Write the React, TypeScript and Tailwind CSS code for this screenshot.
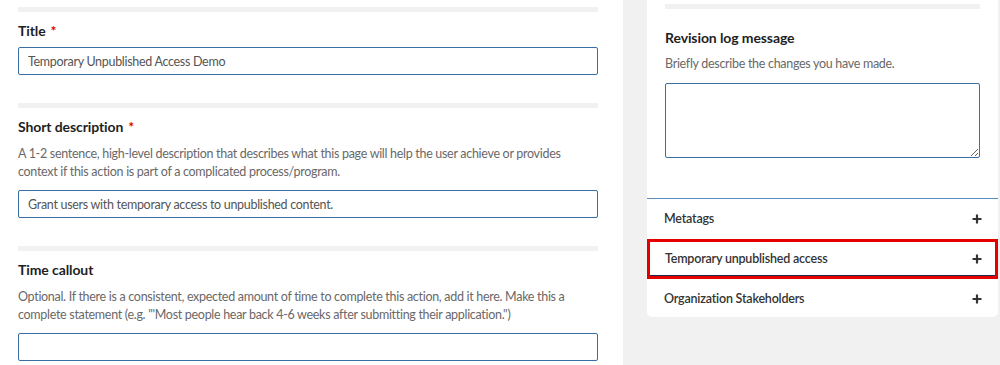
const Bar = () => <div className="h-[5px] bg-[#f1f1f1]" />;

const Field = ({
  label,
  required,
  help,
  value,
}: {
  label: string;
  required?: boolean;
  help?: string;
  value?: string;
}) => (
  <div className="pb-[28px]">
    <Bar />
    <div className="pt-[9px] text-[14px] leading-[20px] font-bold text-[#1f1f1f] tracking-[-0.1px]">
      {label}
      {required && <span className="ml-[5px] text-[#e00000]">*</span>}
    </div>
    {help && (
      <p className="mt-[8px] text-[12.5px] leading-[18px] tracking-[-0.3px] text-[#6a6868]">
        {help}
      </p>
    )}
    <input
      readOnly
      value={value ?? ""}
      className={`${
        help ? "mt-[9px]" : "mt-[6px]"
      } block h-[28px] w-full rounded-[2px] border border-[#3a6ea5] px-[9px] text-[12.5px] tracking-[-0.3px] text-[#555] outline-none`}
    />
  </div>
);

const Plus = () => (
  <svg width="10" height="10" viewBox="0 0 10 10" className="text-[#333]">
    <path d="M5 0.5v9M0.5 5h9" stroke="currentColor" strokeWidth="2.2" />
  </svg>
);

const Row = ({ label, highlight }: { label: string; highlight?: boolean }) => (
  <div
    className={`flex h-[40px] items-center justify-between ${
      highlight
        ? "border-[3px] border-[#e50000] pl-[15px] pr-[13px] shadow-[inset_0_-1px_0_#1d2a4a]"
        : "pl-[17px] pr-[16px]"
    }`}
  >
    <span className="text-[12.5px] font-semibold tracking-[-0.2px] text-[#333]">
      {label}
    </span>
    <Plus />
  </div>
);

export default function App() {
  return (
    <div
      className="flex h-[365px] w-[1000px] overflow-hidden bg-white"
      style={{ fontFamily: "Lato, 'Noto Sans', sans-serif" }}
    >
      <div className="w-[623px] shrink-0 pl-[18px] pr-[25px] pt-[7px]">
        <Field label="Title" required value="Temporary Unpublished Access Demo" />
        <Field
          label="Short description"
          required
          help="A 1-2 sentence, high-level description that describes what this page will help the user achieve or provides context if this action is part of a complicated process/program."
          value="Grant users with temporary access to unpublished content."
        />
        <Field
          label="Time callout"
          help={`Optional. If there is a consistent, expected amount of time to complete this action, add it here. Make this a complete statement (e.g. "'Most people hear back 4-6 weeks after submitting their application.")`}
        />
      </div>
      <div className="flex-1 bg-[#f1f1f1] pl-[24px] pr-[2px]">
        <div className="rounded-b-[5px] bg-white pt-[4px]">
          <div className="px-[18px]">
            <Bar />
            <div className="pt-[19px] text-[14px] leading-[20px] font-bold tracking-[-0.1px] text-[#1f1f1f]">
              Revision log message
            </div>
            <p className="mt-[7px] text-[12.5px] leading-[18px] tracking-[-0.3px] text-[#6a6868]">
              Briefly describe the changes you have made.
            </p>
            <textarea
              readOnly
              className="mt-[10px] block h-[75px] w-full rounded-[2px] border border-[#3a6ea5] outline-none"
            />
          </div>
          <div className="mt-[40px] h-px bg-[#5c8dbf]" />
          <Row label="Metatags" />
          <Row label="Temporary unpublished access" highlight />
          <div className="h-[38px]">
            <Row label="Organization Stakeholders" />
          </div>
        </div>
      </div>
    </div>
  );
}
